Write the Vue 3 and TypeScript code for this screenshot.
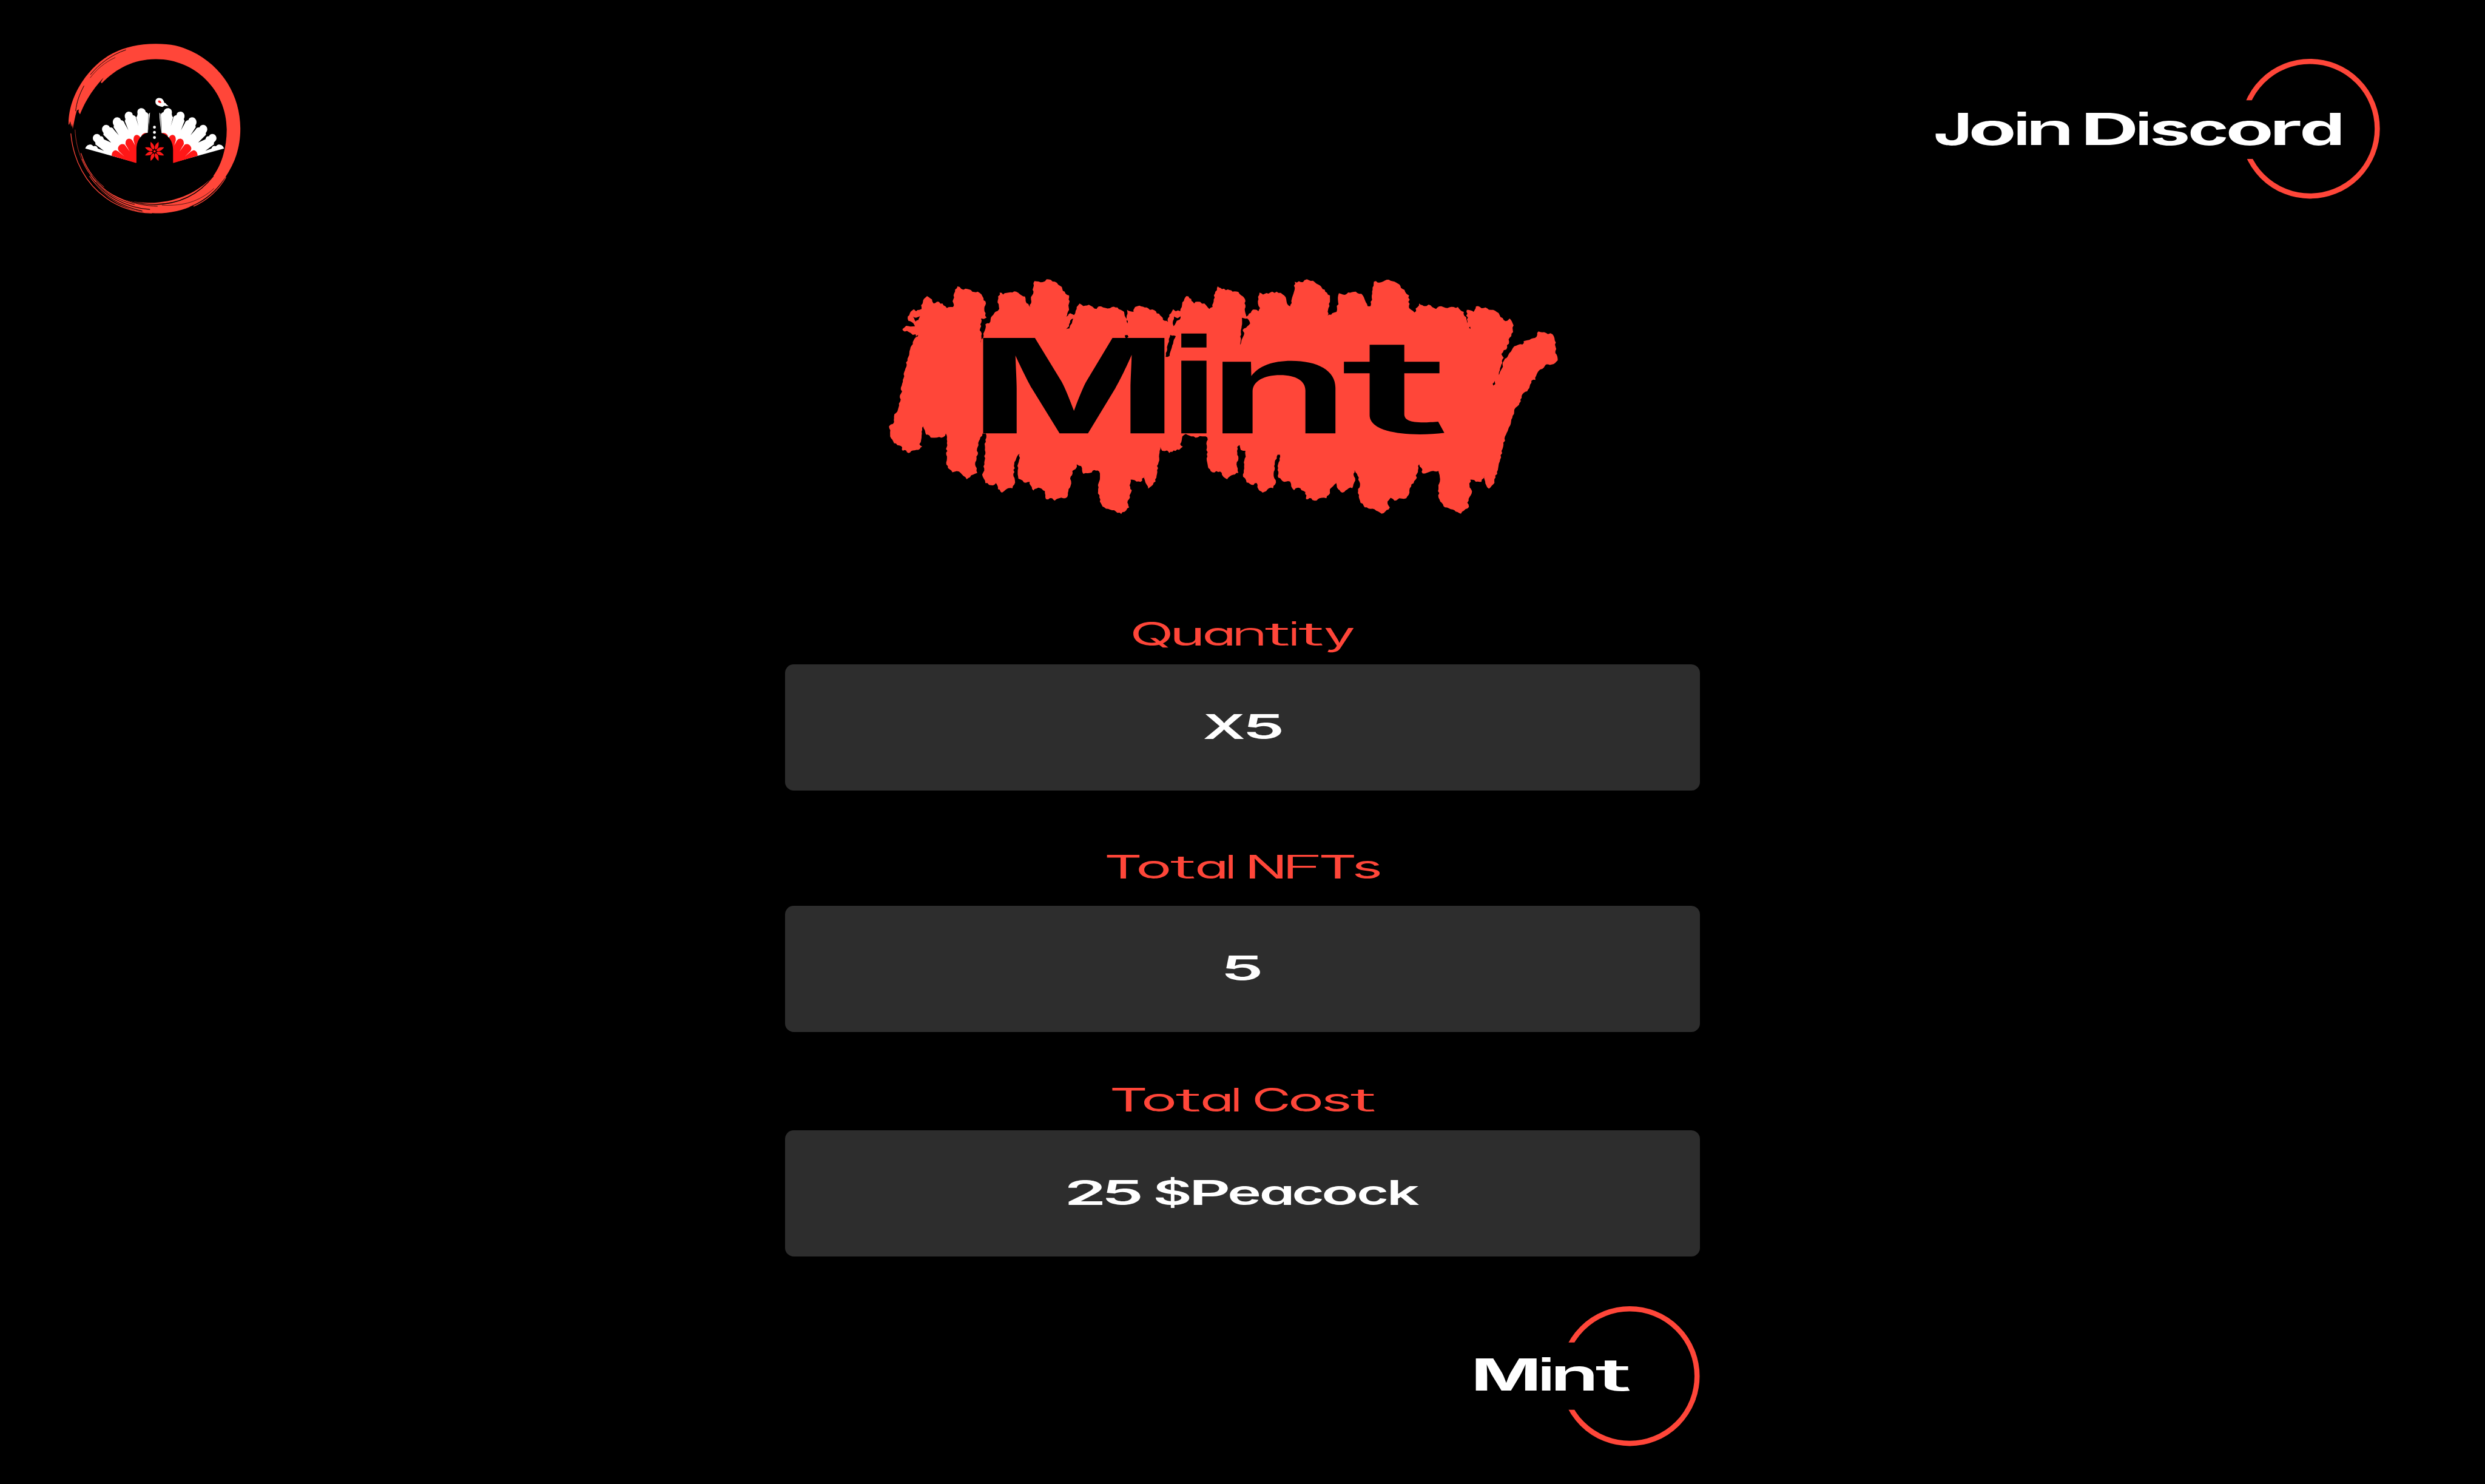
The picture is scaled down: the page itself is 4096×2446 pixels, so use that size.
<script setup lang="ts">
import { h, type FunctionalComponent } from 'vue'

type Glyph = [char: string, left: number, right: number]
type Point = [x: number, y: number]

interface WordProps {
  glyphs: Glyph[]
  baseline: number
  size: number
  weight: number
  fill: string
}

const FONT = 'Inter, "Open Sans", sans-serif'
const SQUARE_FONT = '"Liberation Sans", Arial, sans-serif'
const RED = '#ff4639'

/* ---------- wide lettering ---------- */

// Builds glyph extents from an origin and a measuring scale.
function word(text: string, origin: number, scale: number, edges: number[]): Glyph[] {
  let i = 0
  return [...text].map((char): Glyph => {
    if (char === ' ') return [char, 0, 0]
    const left = origin + edges[i++] / scale
    const right = origin + edges[i++] / scale
    return [char, left, right]
  })
}

const canvas = document.createElement('canvas').getContext('2d')!

// Narrow letters gain the most width, so they start from a lighter cut;
// the i comes from a face with a square dot.
function cut(char: string, p: WordProps) {
  if (char === 'i') {
    return { family: SQUARE_FONT, weight: p.weight >= 600 ? 700 : 400, size: p.size * 1.05 }
  }
  let weight = p.weight
  if (char === 't') weight -= p.weight >= 600 ? 200 : 100
  else if ('nrF'.includes(char)) weight -= p.weight >= 600 ? 100 : 50
  return { family: FONT, weight, size: p.size }
}

// Stretches every letter to its own extents, keeping the word as one text.
const WideText: FunctionalComponent<WordProps> = (p) => {
  const spans = p.glyphs.map(([char, left, right]) => {
    if (char === ' ') return h('tspan', ' ')
    const c = cut(char, p)
    const k = c.size / 200
    canvas.font = `${c.weight} 200px ${c.family}`
    const m = canvas.measureText(char)
    const bearing = -m.actualBoundingBoxLeft * k
    const ink = (m.actualBoundingBoxRight + m.actualBoundingBoxLeft) * k
    const s = (right - left) / ink
    return h('tspan', {
      x: (left - bearing * s).toFixed(2),
      textLength: (m.width * k * s).toFixed(2),
      lengthAdjust: 'spacingAndGlyphs',
      'font-family': c.family,
      'font-weight': c.weight,
      'font-size': c.size,
    }, char)
  })
  return h('text', {
    y: p.baseline,
    fill: p.fill,
    style: { whiteSpace: 'pre', fontFeatureSettings: '"cv11"' },
  }, spans)
}
WideText.props = ['glyphs', 'baseline', 'size', 'weight', 'fill']

const joinWord = word('Join Discord', 3340, 1.9122, [
  47, 155, 166, 306, 319, 348, 364, 491, 547, 711, 724, 753, 767, 885, 894, 1014,
  1021, 1161, 1174, 1260, 1266, 1394,
])
const mintWord = word('Mint', 2520, 3, [138, 456, 482, 528, 553, 752, 763, 943])
const titleWord: Glyph[] = [
  ['M', 1709, 2026], ['i', 2052.3, 2098.6], ['n', 2124.5, 2322], ['t', 2333.9, 2513.5],
]

const fields = [
  {
    id: 'quantity',
    labelBox: '1950 1081 420 41',
    baseline: 1122,
    label: word('Quantity', 1950, 3, [59, 254, 273, 411, 432, 573, 596, 736, 748, 871, 888, 909, 924, 1048, 1061, 1211]),
    value: word('X5', 1340, 0.9561, [720, 786, 791, 848]),
  },
  {
    id: 'nfts',
    labelBox: '1950 1486 420 41',
    baseline: 1527,
    label: word('Total NFTs', 1910, 3, [42, 213, 209, 365, 375, 499, 513, 654, 678, 699, 787, 960, 986, 1146, 1160, 1332, 1336, 1466]),
    value: word('5', 1340, 0.9561, [755, 813]),
  },
  {
    id: 'cost',
    labelBox: '1950 1891 420 41',
    baseline: 1932,
    label: word('Total Cost', 1910, 3, [70, 242, 237, 393, 403, 527, 541, 682, 706, 728, 814, 988, 1003, 1159, 1176, 1306, 1315, 1440]),
    value: word('25 $Peacock', 1840, 3, [
      50, 228, 246, 426, 505, 681, 704, 883, 892, 1044, 1058, 1211, 1228, 1374,
      1384, 1552, 1566, 1711, 1731, 1880,
    ]),
  },
]

/* ---------- paint scribble behind the title ---------- */

const parse = (src: string): Point[] =>
  src.trim().split(/\s+/).map((s) => s.split(',').map(Number) as Point)
const west = (src: string): Point[] => parse(src).map(([x, y]) => [1520 + x / 2.6133, 470 + y / 3])
const east = (src: string): Point[] => parse(src).map(([x, y]) => [2100 + x / 2.45, 470 + y / 3])

let seed = 11
const rand = () => {
  seed = (seed * 16807) % 2147483647
  return seed / 2147483647 - 0.5
}

// Breaks each edge into short, slightly displaced steps: a dry-brush border.
function rough(points: Point[], amount = 3): string {
  const out: string[] = []
  points.forEach(([x, y], i) => {
    const [nx, ny] = points[(i + 1) % points.length]
    const len = Math.hypot(nx - x, ny - y)
    const steps = Math.max(1, Math.round(len / 3.5))
    for (let s = 0; s < steps; s++) {
      const t = s / steps
      const d = s === 0 ? 0 : rand() * amount
      out.push(`${(x + (nx - x) * t + (d * (ny - y)) / len).toFixed(1)} ${(y + (ny - y) * t - (d * (nx - x)) / len).toFixed(1)}`)
    }
  })
  return `M${out.join('L')}Z`
}

const outline: Point[] = [
  ...west(`200,335 190,350 188,332 175,335 165,325 130,312 128,305 145,288 165,292 185,290 178,275 155,262 152,240 165,215
    180,202 190,212 205,205 215,200 213,180 222,155 240,133 262,150 270,172 285,162 310,172 330,195 345,190 358,190 360,130
    367,110 378,82 395,95 425,97 445,110 470,110 492,135 497,155 505,160 500,200 510,245 498,252 485,250 482,300 487,350
    480,388 495,350 505,280 522,275 530,245 550,215 568,200 560,165 570,115 585,125 610,115 645,110 670,130 685,135 692,170
    708,190 712,150 722,120 722,90 728,55 765,60 783,45 820,58 845,80 865,110 885,130 885,170 880,215 872,240 890,222
    908,232 915,210 920,190 933,172 950,185 975,178 1010,200 1020,187 1060,198 1080,190 1105,192 1120,205 1135,215 1150,275
    1148,205 1178,215 1185,190 1205,183 1245,197 1280,213 1305,240 1320,262 1335,268 1340,230 1358,202 1370,212 1390,212
    1397,190 1400,165 1418,133 1440,148 1453,172 1470,162 1500,172 1514,190`),
  ...east(`6,200 20,190 25,150 30,120 42,82 60,97 85,98 105,110 130,112 150,135 160,160 157,200 164,240 175,225 192,203
    215,212 222,195 213,160 220,115 235,125 265,115 293,110 325,130 335,160 350,187 357,150 367,110 370,58 405,60 422,45
    455,60 480,80 500,110 520,130 518,185 510,235 530,222 548,215 555,165 558,118 575,125 630,110 660,130 680,185 693,185
    700,120 707,58 740,60 762,47 795,58 820,80 840,110 857,130 857,195 880,218 900,172 920,185 940,177 972,200 985,187
    1020,195 1065,190 1090,215 1105,275 1103,205 1132,215 1142,187 1190,197 1230,215 1260,258 1275,262 1285,250 1298,275
    1300,320 1285,350 1275,400 1250,435 1260,455 1250,490 1240,530 1232,560 1248,520 1265,460 1280,440 1305,395 1340,385
    1345,368 1400,345 1408,317 1440,325 1468,332 1482,375 1480,420 1490,468 1465,490 1440,490 1405,530 1395,570 1378,575
    1360,630 1340,645 1325,700 1305,725 1290,800 1270,855 1255,930 1245,985 1235,1040 1225,1080 1215,1115 1197,1138
    1182,1110 1178,1070 1165,1102 1150,1100 1118,1090 1115,1130 1125,1150 1115,1180 1105,1210 1112,1232 1078,1268 1050,1250
    1010,1235 990,1205 980,1150 988,1100 982,1045 960,1045 915,1058 910,1030 900,1010 895,1040 885,1090 860,1135 855,1170
    845,1187 815,1187 795,1200 778,1185 765,1205 775,1235 740,1268 710,1245 668,1235 648,1200 640,1150 648,1110 635,1060
    625,1040 620,1060 628,1095 615,1135 600,1135 572,1158 555,1140 547,1108 520,1140 515,1170 505,1187 475,1187 455,1200
    440,1187 418,1192 415,1155 385,1132 367,1145 355,1125 350,1100 325,1102 300,1080 297,1040 307,960 297,960 285,1000
    280,1060 290,1105 278,1135 260,1135 233,1158 215,1140 208,1108 195,1118 165,1105 150,1075 155,1010 160,940 140,935
    135,910 125,920 130,980 122,1010 130,1055 100,1068 82,1088 60,1065 52,1048 20,1052 2,1030`),
  ...west(`1510,980 1513,870 1490,865 1460,872 1440,865 1415,852 1400,865 1390,905 1402,918 1385,935 1360,938 1340,952
    1330,938 1308,940 1300,920 1295,980 1285,1040 1278,1100 1245,1138 1232,1105 1228,1070 1210,1102 1165,1090 1160,1120
    1170,1145 1150,1210 1158,1235 1122,1270 1090,1250 1045,1235 1025,1205 1017,1140 1025,1090 1022,1048 1000,1040 980,1055
    950,1060 940,1020 920,1010 915,1035 900,1045 890,1085 895,1110 883,1140 880,1170 868,1187 840,1187 820,1200 808,1187
    780,1192 775,1150 745,1132 723,1147 710,1120 706,1102 680,1105 655,1085 652,1040 660,955 642,990 632,1060 640,1105
    628,1135 608,1135 580,1158 562,1140 553,1108 540,1120 505,1108 493,1075 500,1000 507,850 492,850 480,880 470,920
    465,980 460,1020 468,1055 440,1068 420,1088 398,1062 385,1048 355,1052 335,1030 327,1000 330,900 325,850 315,868
    265,872 235,855 222,812 215,840 215,860 205,905 218,918 200,935 175,938 155,952 145,938 130,940 122,915 90,900 72,865
    67,812 85,800 90,760 110,715 122,640 125,600 142,510 165,400 183,355`),
]

const gaps: Point[][] = [
  west('175,240 190,246 208,238 200,258 188,266'),
  west('872,305 885,290 890,262 904,250 898,275 886,302'),
  west('1345,335 1370,342 1358,380 1342,445 1324,450 1335,380'),
  west('1362,240 1378,248 1392,238 1388,256 1374,262 1360,290 1356,275'),
  west('1138,338 1150,335 1155,346 1144,354'),
  east('145,246 168,250 180,275 148,310 155,325 142,370 137,388 143,300'),
  east('1213,590 1222,575 1224,592 1216,600'),
  east('1112,298 1117,292 1119,304'),
]

const scribble = rough(outline)
const scribbleGaps = gaps.map((g) => rough(g, 2)).join('')

const petals = [22.5, 67.5, 112.5, 157.5, 202.5, 247.5, 292.5, 337.5]
</script>

<template>
  <div class="page">
    <header class="header">
      <svg class="logo" viewBox="0 0 1020 960">
        <g :fill="RED">
          <path
            d="M57 468C56 380 92 300 128 246C220 110 340 48 515 48C590 48 640 58 700 88C860 165 953 320 953 490C953 590 925 670 872 748C790 870 660 932 515 932C370 932 240 860 165 740L172 730C220 800 300 850 370 865C420 876 460 877 505 877C630 870 735 820 810 740C855 680 882 590 882 495C882 290 715 128 515 128C400 128 310 172 230 254L225 248L240 224C170 300 140 360 117 416L109 404L110 390L100 396C90 430 85 460 79 492L75 465L71 482L66 452L60 470Z"
          />
        </g>
        <g fill="none" :stroke="RED" stroke-linecap="round">
          <path d="M69 517C82 660 150 780 250 850C310 895 400 930 490 931" stroke-width="4" />
          <path d="M91 497C96 610 140 710 215 785" stroke-width="2" />
          <path d="M122 620C145 690 185 750 240 795" stroke-width="4" />
          <path d="M128 650C150 710 190 765 250 810" stroke-width="3" />
          <path d="M877 745C840 810 780 865 710 895" stroke-width="4" />
        </g>
        <g fill="none" stroke="#000" stroke-linecap="round">
          <path d="M355 80C280 105 215 155 172 208" stroke-width="3" />
          <path d="M300 120C245 145 205 180 170 225" stroke-width="2" />
          <path d="M137 268C112 315 100 350 94 398" stroke-width="3" />
          <path d="M812 738C740 830 640 885 505 886C430 884 360 870 305 833" stroke-width="4" />
          <path d="M815 803C740 870 660 895 545 890" stroke-width="2" />
          <path d="M520 895C400 892 270 850 180 735" stroke-width="3" />
          <path d="M480 912C370 905 240 850 160 722" stroke-width="4" />
          <path d="M440 920C330 898 235 845 150 725" stroke-width="4" />
          <path d="M870 752C820 820 770 865 690 898" stroke-width="2" />
          <path d="M200 770C250 825 320 868 400 886" stroke-width="3" />
        </g>
        <g v-for="side in ['', 'translate(1012 0) scale(-1 1)']" :key="side" :transform="side">
          <path
            fill="#fff"
            d="M144 594C150 578 162 572 176 574Q184 578 186 582Q204 576 210 594L242 607L196 572Q200 564 192 558C176 545 184 518 206 518Q220 520 222 530Q238 528 241 546L279 563L238 522Q242 514 236 508C224 490 238 470 254 471Q268 472 272 484Q288 482 293 496L319 525L291 482Q296 474 290 468C282 448 296 431 311 431Q326 432 330 446Q346 448 349 463L369 499L350 450Q356 442 352 436C345 415 358 402 372 402Q390 403 392 420Q410 422 410 440L422 478L410 432Q416 424 417 414C412 394 424 384 437 384Q455 385 460 404Q472 408 474 418L470 515L409 668Z"
          />
          <path fill="#fff" d="M476 412L483 406L473 512Z" />
          <path
            fill="#ff1717"
            d="M282 632C282 610 296 602 306 604Q316 608 320 612L348 636L320 608Q312 598 316 588C322 570 340 568 350 574L376 610L354 572Q352 546 372 543Q384 544 390 552L404 578L396 552Q394 526 412 523Q428 524 433 542L425 600L410 670Z"
          />
          <path fill="#ff1717" d="M438 526Q450 509 470 514L470 540L438 540Z" />
        </g>
        <path d="M411 672V600C411 545 445 514 472 512L485 380H530L533 512C568 516 602 548 602 600V672Z" />
        <g fill="#fff">
          <circle cx="505" cy="483" r="7.5" />
          <circle cx="505" cy="510" r="7.5" />
          <circle cx="505" cy="537" r="7.5" />
          <path
            d="M510 350C510 337 519 331 530 331C545 331 553 342 556 355L564 358L566 362L579 374L557 371L552 374L546 377C520 372 510 366 510 350Z"
          />
        </g>
        <path fill="#ff1717" d="M523 347Q528 341 535 345Q541 350 541 357Q526 358 523 347Z" />
        <g fill="#ff1717" transform="translate(505.500 609)">
          <path
            v-for="a in petals"
            :key="a"
            :transform="`rotate(${a})`"
            d="M0 -10C-11 -20 -12 -32 0 -54C12 -32 11 -20 0 -10Z"
          />
          <circle r="6" />
        </g>
      </svg>

      <a class="join">
        <svg viewBox="3360 102 777 243">
          <circle cx="4015.500" cy="223.500" r="117" fill="none" :stroke="RED" stroke-width="9" />
          <rect x="3880" y="174" width="80" height="102" />
          <WideText :glyphs="joinWord" :baseline="252" :size="76.5" :weight="700" fill="#fff" />
        </svg>
      </a>
    </header>

    <main class="mint">
      <h1 class="title">
        <svg viewBox="1520 470 1220 440">
          <path :d="scribble" :fill="RED" />
          <path :d="scribbleGaps" />
          <WideText :glyphs="titleWord" :baseline="753" :size="228" :weight="700" fill="#000" />
        </svg>
      </h1>

      <section v-for="f in fields" :key="f.id" class="field" :class="f.id">
        <svg class="label" :viewBox="f.labelBox">
          <WideText :glyphs="f.label" :baseline="f.baseline" :size="56.5" :weight="400" :fill="RED" />
        </svg>
        <div class="box">
          <svg class="value" viewBox="1840 0 640 43">
            <WideText :glyphs="f.value" :baseline="43" :size="59" :weight="600" fill="#fff" />
          </svg>
        </div>
      </section>

      <button class="submit" type="button">
        <svg viewBox="2560 2271 395 243">
          <circle cx="2833.500" cy="2392.500" r="117" fill="none" :stroke="RED" stroke-width="9" />
          <rect x="2700" y="2334" width="80" height="117" />
          <WideText :glyphs="mintWord" :baseline="2418" :size="76.5" :weight="700" fill="#fff" />
        </svg>
      </button>
    </main>
  </div>
</template>

<style>
body {
  margin: 0;
  background: #000;
}
</style>

<style scoped>
.page {
  --u: calc(100vw / 4320);
  width: 100vw;
  height: 100vh;
  overflow: hidden;
  background: #000;
  display: flex;
  flex-direction: column;
}

svg {
  display: block;
  overflow: visible;
}

.header {
  box-sizing: border-box;
  display: flex;
  justify-content: space-between;
  align-items: flex-start;
  height: calc(470 * var(--u));
  padding: calc(60 * var(--u)) calc(183 * var(--u)) 0 calc(100 * var(--u));
}

.logo {
  width: calc(340 * var(--u));
  height: calc(320 * var(--u));
}

.join {
  margin-top: calc(42 * var(--u));
}

.join svg {
  width: calc(777 * var(--u));
  height: calc(243 * var(--u));
}

.mint {
  width: calc(1590 * var(--u));
  margin: 0 auto;
  display: flex;
  flex-direction: column;
}

.title {
  margin: 0 0 calc(171 * var(--u)) calc(155 * var(--u));
}

.title svg {
  width: calc(1220 * var(--u));
  height: calc(440 * var(--u));
}

.field {
  display: flex;
  flex-direction: column;
  align-items: center;
  gap: calc(33 * var(--u));
}

.field.nfts {
  gap: calc(48 * var(--u));
  margin: calc(112 * var(--u)) 0 calc(97 * var(--u));
}

.label {
  width: calc(420 * var(--u));
  height: calc(41 * var(--u));
}

.box {
  box-sizing: border-box;
  width: 100%;
  height: calc(219 * var(--u));
  padding-bottom: calc(4 * var(--u));
  border-radius: calc(15 * var(--u));
  background: #2d2d2d;
  display: flex;
  align-items: center;
  justify-content: center;
}

.value {
  width: calc(640 * var(--u));
  height: calc(43 * var(--u));
}

.submit {
  align-self: flex-end;
  margin: calc(87 * var(--u)) 0 0;
  padding: 0;
  border: 0;
  background: none;
}

.submit svg {
  width: calc(395 * var(--u));
  height: calc(243 * var(--u));
}
</style>
